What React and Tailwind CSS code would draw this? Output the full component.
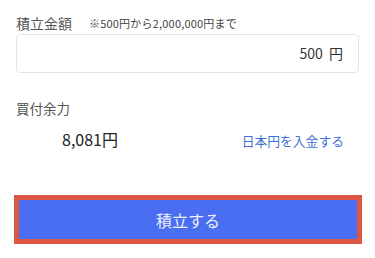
export default function App() {
  return (
    <div
      className="w-[375px] h-[258px] bg-white px-4 pt-[13px] text-[#333]"
      style={{ fontFamily: '"Noto Sans CJK JP", "Noto Sans", sans-serif' }}
    >
      {/* 積立金額 */}
      <div className="flex items-center h-5">
        <span className="text-[14px] text-[#555]">積立金額</span>
        <span className="ml-[17px] text-[11px] tracking-[0.2px] text-[#444]">※500円から2,000,000円まで</span>
      </div>
      <div className="mt-[1px] h-[39px] rounded-[4px] border border-[#e4e4e4] flex items-center justify-end pr-[15px]">
        <span className="text-[14px] text-[#333]">500&nbsp;&nbsp;円</span>
      </div>

      {/* 買付余力 */}
      <div className="mt-[25px] h-5 flex items-center text-[13.5px] text-[#555]">買付余力</div>
      <div className="mt-[9px] flex items-center justify-between h-6">
        <span className="ml-[46px] text-[16px] text-[#222]">8,081円</span>
        <button className="mr-[15px] mt-[3px] text-[12.8px] text-[#3d6fd6]">日本円を入金する</button>
      </div>

      {/* 積立する */}
      <div className="mt-[44px] ml-[-2px] mr-[-3px]">
        <button className="w-full h-[49px] bg-[#4a6ef2] border-[5.5px] border-[#dc5844] text-[16px] text-[#eef0ff] flex items-center justify-center">
          積立する
        </button>
      </div>
    </div>
  );
}
